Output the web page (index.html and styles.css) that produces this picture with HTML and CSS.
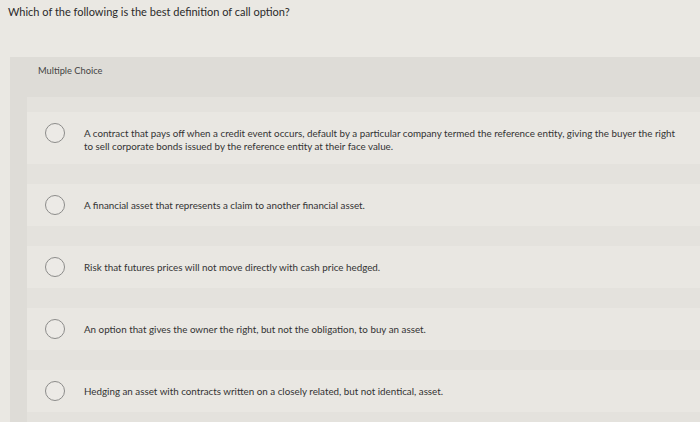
FILE: index.html
```html
<!DOCTYPE html>
<html lang="en">
<head>
<meta charset="utf-8">
<title>Call option question</title>
<link rel="stylesheet" href="styles.css">
</head>
<body>
  <h1 class="question">Which of the following is the best definition of call option?</h1>
  <section class="panel">
    <div class="panel-header">Multiple Choice</div>
    <ul class="options">
      <li class="option">
        <span class="radio"></span>
        <p class="option-text">A contract that pays off when a credit event occurs, default by a particular company termed the reference entity, giving the buyer the right to sell corporate bonds issued by the reference entity at their face value.</p>
      </li>
      <li class="option">
        <span class="radio"></span>
        <p class="option-text">A financial asset that represents a claim to another financial asset.</p>
      </li>
      <li class="option">
        <span class="radio"></span>
        <p class="option-text">Risk that futures prices will not move directly with cash price hedged.</p>
      </li>
      <li class="option">
        <span class="radio"></span>
        <p class="option-text">An option that gives the owner the right, but not the obligation, to buy an asset.</p>
      </li>
      <li class="option">
        <span class="radio"></span>
        <p class="option-text">Hedging an asset with contracts written on a closely related, but not identical, asset.</p>
      </li>
    </ul>
  </section>
</body>
</html>
```

FILE: styles.css
```css
* { box-sizing: border-box; }

html, body {
  margin: 0;
  padding: 0;
  height: 100%;
  overflow: hidden;
}

body {
  background: #eae8e3;
  font-family: Lato, "Liberation Sans", Arial, sans-serif;
  color: #333;
}

.question {
  margin: 0;
  padding: 5px 0 0 8px;
  height: 57px;
  font-size: 11px;
  line-height: 14px;
  font-weight: 400;
  color: #2a2a2a;
}

.panel {
  margin-left: 10px;
  min-height: 365px;
  background: #dedcd7;
}

.panel-header {
  height: 40px;
  padding: 8px 0 0 28px;
  font-size: 9.3px;
  line-height: 12px;
  color: #444;
}

.options {
  list-style: none;
  margin: 0 0 0 17px;
  padding: 15px 0 12px 0;
  display: flex;
  flex-direction: column;
  gap: 20px;
  background: #e4e2dd;
}

.option {
  display: flex;
  align-items: flex-start;
  gap: 19px;
  padding: 11px 0 11px 18px;
  background: #e9e7e2;
}

.radio {
  flex: none;
  width: 20px;
  height: 20px;
  border-radius: 50%;
  border: 1.5px solid #8c8c8a;
  background: #eceae6;
}

.option-text {
  margin: 0;
  padding-top: 4px;
  max-width: 595px;
  font-size: 9.8px;
  line-height: 13px;
  color: #333;
}
```
